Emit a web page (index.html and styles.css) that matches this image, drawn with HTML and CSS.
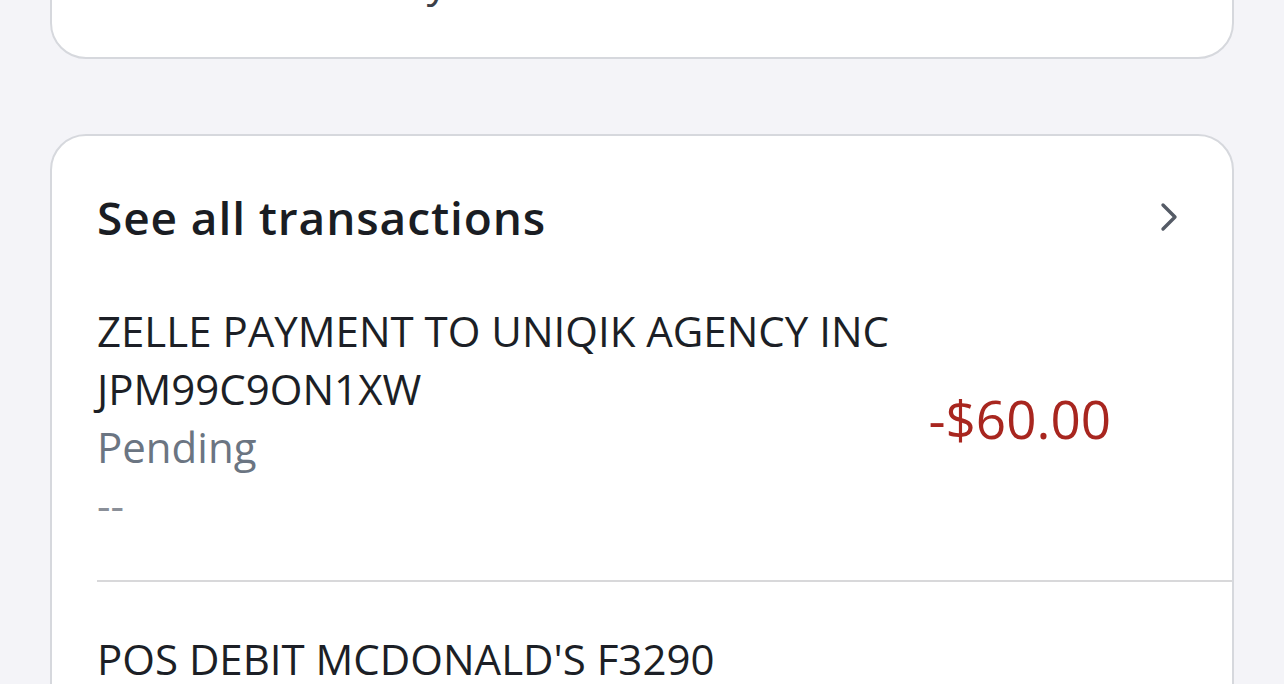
FILE: index.html
```html
<!DOCTYPE html>
<html lang="en">
<head>
    <meta charset="UTF-8">
    <meta name="viewport" content="width=device-width, initial-scale=1.0">
    <title>Account activity</title>
    <link rel="stylesheet" href="styles.css">
</head>
<body>
    <div class="page">
        <div class="card notice">
            <p class="notice-text">Processed usually at the end of the month.</p>
        </div>

        <div class="card activity">
            <div class="activity-header">
                <h2>See all transactions</h2>
                <svg class="chevron" width="22" height="32" viewBox="0 0 22 32">
                    <path d="M5 4 L17 16 L5 28" fill="none" stroke="#555b66" stroke-width="3.4" stroke-linecap="round" stroke-linejoin="round"/>
                </svg>
            </div>

            <div class="txn">
                <div class="txn-info">
                    <div class="txn-name">ZELLE PAYMENT TO UNIQIK AGENCY INC JPM99C9ON1XW</div>
                    <div class="txn-status">Pending</div>
                    <div class="txn-balance">--</div>
                </div>
                <div class="txn-amount">-$60.00</div>
            </div>

            <div class="txn">
                <div class="txn-info">
                    <div class="txn-name">POS DEBIT MCDONALD'S F3290</div>
                    <div class="txn-status">Posted</div>
                    <div class="txn-balance">--</div>
                </div>
                <div class="txn-amount">-$12.48</div>
            </div>
        </div>
    </div>
</body>
</html>
```

FILE: styles.css
```css
body {
    margin: 0;
    background-color: #f4f4f8;
    font-family: "Open Sans", "Noto Sans", sans-serif;
    color: #1c1f26;
    overflow: hidden;
}
.page {
    padding: 0 50px;
}
.card {
    background-color: #fff;
    border: 2px solid #d6d8dd;
    border-radius: 36px;
    box-sizing: border-box;
}
.notice {
    margin-top: -80px;
    padding: 30px 47px 47px;
}
.notice-text {
    margin: 0;
    font-size: 42px;
    line-height: 58px;
    color: #3c4048;
    white-space: nowrap;
}
.activity {
    margin-top: 75px;
    padding-left: 45px;
}
.activity-header {
    display: flex;
    align-items: center;
    justify-content: space-between;
    padding: 50px 52px 0 0;
}
.activity-header h2 {
    margin: 0;
    font-size: 46px;
    line-height: 62px;
    font-weight: 600;
    letter-spacing: 0.9px;
    color: #1a1d23;
}
.chevron {
    display: block;
}
.txn {
    display: flex;
    align-items: center;
    justify-content: space-between;
    padding: 54px 121px 46px 0;
    border-bottom: 2px solid #d8d8da;
}
.txn + .txn {
    padding-top: 48px;
}
.txn-info {
    max-width: 800px;
}
.txn-name,
.txn-status,
.txn-balance {
    font-size: 42px;
    line-height: 58px;
}
.txn-status {
    color: #6b7582;
}
.txn-balance {
    color: #8a8f98;
}
.txn-amount {
    font-size: 53px;
    color: #a8261f;
}
```
